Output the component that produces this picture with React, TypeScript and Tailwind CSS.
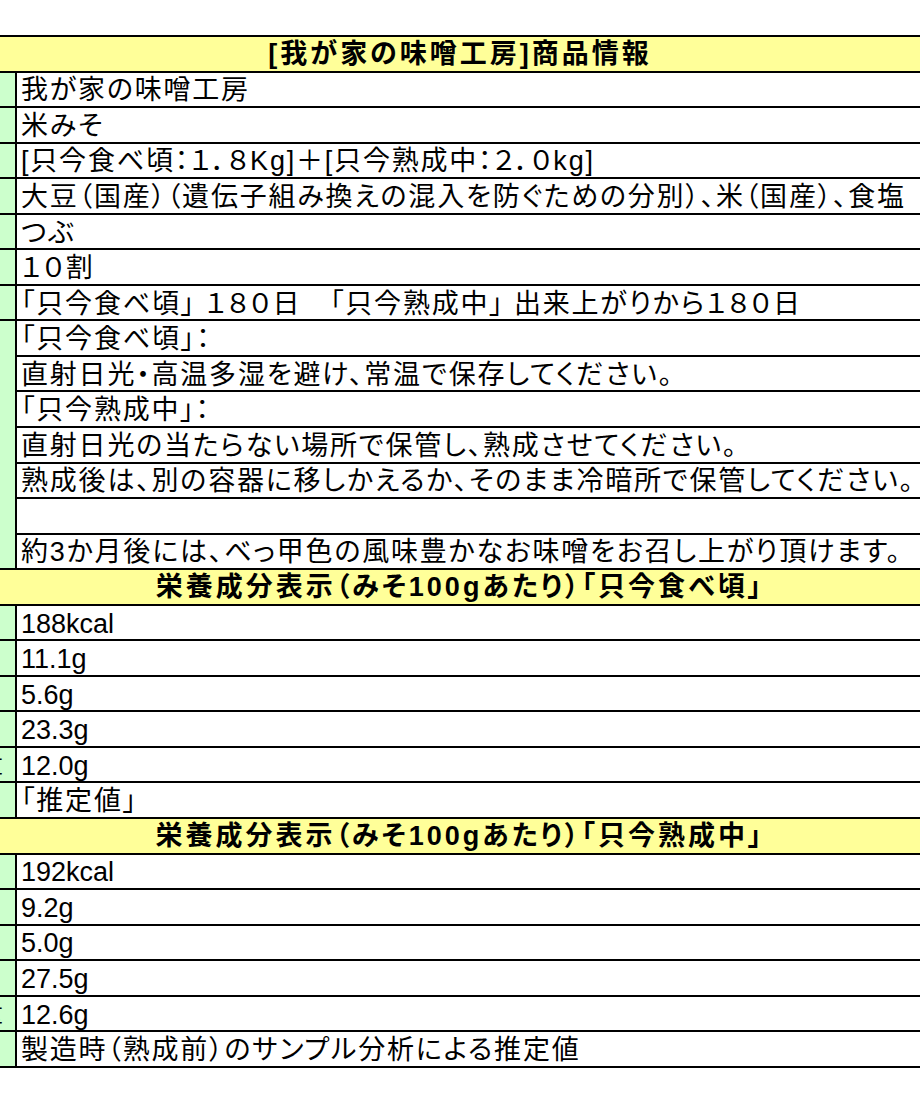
import React from "react";

type Row = { text: string; frag?: string; latin?: boolean };

const info: Row[] = [
  { text: "我が家の味噌工房" },
  { text: "米みそ" },
  { text: "[只今食べ頃：１．８Kg]＋[只今熟成中：２．０kg]" },
  { text: "大豆（国産）（遺伝子組み換えの混入を防ぐための分別）、米（国産）、食塩" },
  { text: "つぶ" },
  { text: "１０割" },
  { text: "「只今食べ頃」 １８０日　「只今熟成中」 出来上がりから１８０日" },
];

const storage: string[] = [
  "「只今食べ頃」：",
  "直射日光・高温多湿を避け、常温で保存してください。",
  "「只今熟成中」：",
  "直射日光の当たらない場所で保管し、熟成させてください。",
  "熟成後は、別の容器に移しかえるか、そのまま冷暗所で保管してください。",
  "",
  "約3か月後には、べっ甲色の風味豊かなお味噌をお召し上がり頂けます。",
];

const nutritionA: Row[] = [
  { text: "188kcal", latin: true },
  { text: "11.1g", latin: true },
  { text: "5.6g", latin: true },
  { text: "23.3g", latin: true },
  { text: "12.0g", frag: "量", latin: true },
  { text: "「推定値」" },
];

const nutritionB: Row[] = [
  { text: "192kcal", latin: true },
  { text: "9.2g", latin: true },
  { text: "5.0g", latin: true },
  { text: "27.5g", latin: true },
  { text: "12.6g", frag: "量", latin: true },
  { text: "製造時（熟成前）のサンプル分析による推定値" },
];

const Header = ({ children }: { children: React.ReactNode }) => (
  <div className="flex h-[35.55px] items-center justify-center border-b-2 border-black bg-[#ffff99] pt-[2px] font-bold">
    <span className="whitespace-nowrap leading-none tracking-[3px]">{children}</span>
  </div>
);

// left label column: only the clipped right edge of the label is visible
const Label = ({ frag, bottom = true }: { frag?: string; bottom?: boolean }) => (
  <div
    className={`flex w-[17px] shrink-0 items-center justify-end overflow-hidden border-r-2 border-black bg-[#ccffcc] ${
      bottom ? "border-b-2" : ""
    }`}
  >
    {frag && <span className="mr-[12px] shrink-0 whitespace-nowrap leading-none">{frag}</span>}
  </div>
);

const Value = ({ text, latin }: { text: string; latin?: boolean }) => (
  <div className="flex min-w-0 flex-1 items-center overflow-hidden border-b-2 border-black pl-[4px] pt-[3px]">
    <span className={`whitespace-nowrap leading-none ${latin ? "" : "tracking-[1.8px]"}`}>{text}</span>
  </div>
);

const Line = ({ row }: { row: Row }) => (
  <div className="flex h-[35.55px]">
    <Label frag={row.frag} />
    <Value text={row.text} latin={row.latin} />
  </div>
);

export default function App() {
  return (
    <div className="h-[1104px] w-[920px] overflow-hidden bg-white pt-[35px] text-[27px] text-black font-['Liberation_Sans','Noto_Sans_CJK_JP',sans-serif] [font-feature-settings:'palt']">
      <div className="border-t-2 border-black">
        <Header>[我が家の味噌工房]商品情報</Header>
        {info.map((r, i) => (
          <Line key={i} row={r} />
        ))}

        {/* merged storage block */}
        <div className="flex">
          <Label />
          <div className="flex min-w-0 flex-1 flex-col">
            {storage.map((t, i) => (
              <div key={i} className="flex h-[35.55px]">
                <Value text={t} />
              </div>
            ))}
          </div>
        </div>

        <Header>栄養成分表示（みそ100gあたり）「只今食べ頃」</Header>
        {nutritionA.map((r, i) => (
          <Line key={i} row={r} />
        ))}

        <Header>栄養成分表示（みそ100gあたり）「只今熟成中」</Header>
        {nutritionB.map((r, i) => (
          <Line key={i} row={r} />
        ))}
      </div>
    </div>
  );
}
